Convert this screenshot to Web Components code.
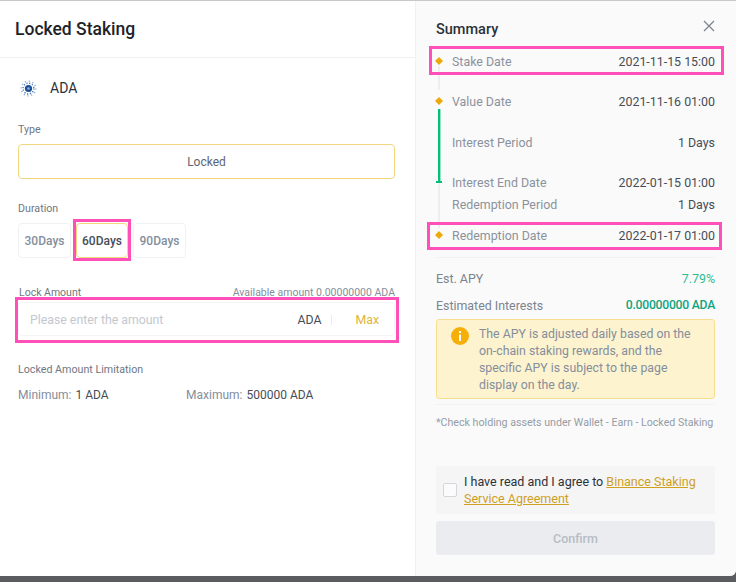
<!DOCTYPE html>
<html>
<head>
<meta charset="utf-8">
<title>Locked Staking</title>
<style>
  html, body { margin: 0; height: 100%; background: #5b5c5f; }
  body { font-family: Roboto, "Liberation Sans", sans-serif; overflow: hidden; }
</style>
</head>
<body>
<staking-modal>
  <form-panel slot="left">
    <panel-title>Locked Staking</panel-title>
    <form-body>
      <coin-row>ADA</coin-row>
      <field-label style="margin-top:24px">Type</field-label>
      <type-box>Locked</type-box>
      <field-label style="margin-top:22px">Duration</field-label>
      <tab-row>
        <duration-tab>30Days</duration-tab>
        <pink-frame style="--t:-4px;--r:-3px;--b:-3px;--l:-3px"><duration-tab active>60Days</duration-tab></pink-frame>
        <duration-tab>90Days</duration-tab>
      </tab-row>
      <amount-head>
        <span>Lock Amount</span>
        <span slot="right">Available amount 0.00000000 ADA</span>
      </amount-head>
      <pink-frame style="--t:-5px;--r:-4px;--b:-7px;--l:-3px">
        <amount-input placeholder="Please enter the amount"></amount-input>
      </pink-frame>
      <field-label style="margin-top:26px">Locked Amount Limitation</field-label>
      <limit-row>
        <limit-item label="Minimum:">1 ADA</limit-item>
        <limit-item label="Maximum:">500000 ADA</limit-item>
      </limit-row>
    </form-body>
  </form-panel>
  <summary-panel slot="right">
    <summary-head>Summary</summary-head>
    <date-list>
      <pink-frame style="--t:-5px;--r:-9px;--b:-4px;--l:-23px"><summary-row label="Stake Date">2021-11-15 15:00</summary-row></pink-frame>
      <summary-row style="margin-top:20px" label="Value Date">2021-11-16 01:00</summary-row>
      <summary-row style="margin-top:21px" label="Interest Period">1 Days</summary-row>
      <summary-row style="margin-top:20px" label="Interest End Date">2022-01-15 01:00</summary-row>
      <summary-row style="margin-top:2px" label="Redemption Period">1 Days</summary-row>
      <pink-frame style="margin-top:11px;--t:-3px;--r:-7px;--b:-5px;--l:-25px"><summary-row label="Redemption Date">2022-01-17 01:00</summary-row></pink-frame>
    </date-list>
    <rate-list>
      <rate-row label="Est. APY">7.79%</rate-row>
      <rate-row style="margin-top:7px" label="Estimated Interests" strong>0.00000000 ADA</rate-row>
    </rate-list>
    <info-note>The APY is adjusted daily based on the on-chain staking rewards, and the specific APY is subject to the page display on the day.</info-note>
    <hold-note>*Check holding assets under Wallet - Earn - Locked Staking</hold-note>
    <agree-box>I have read and I agree to <a>Binance Staking</a> <a>Service Agreement</a></agree-box>
    <confirm-button>Confirm</confirm-button>
  </summary-panel>
</staking-modal>

<script>
function define(name, html) {
  customElements.define(name, class extends HTMLElement {
    constructor() {
      super();
      this.attachShadow({ mode: 'open' }).innerHTML = html;
    }
    connectedCallback() {
      // attributes are copied into the [data-attr] spots
      this.shadowRoot.querySelectorAll('[data-attr]').forEach((el) => {
        el.textContent = this.getAttribute(el.dataset.attr) || '';
      });
    }
  });
}

define('staking-modal', `
<style>
  :host { display: flex; width: 736px; height: 576px; box-sizing: border-box; border-top: 1px solid #c9c9c9;
    background: #fff; border-bottom-right-radius: 6px; overflow: hidden; }
  .l { display: block; width: 416px; flex: none; }
  .r { display: block; width: 320px; flex: none; min-width: 0; }
</style>
<div class="l"><slot name="left"></slot></div>
<div class="r"><slot name="right"></slot></div>`);

define('form-panel', `<style>:host { display: block; height: 575px; background: #fff; border-right: 1px solid #f1f1f1; box-sizing: border-box; }</style><slot></slot>`);

define('panel-title', `
<style>:host { display: flex; align-items: center; height: 57px; box-sizing: border-box; padding: 0 0 0 15px;
  border-bottom: 1px solid #eeeff0; font-size: 17.5px; font-weight: 500; color: #1e2329; }</style><slot></slot>`);

define('form-body', `<style>:host { display: block; padding: 20px 20px 0 18px; }</style><slot></slot>`);

define('coin-row', `
<style>
  :host { display: flex; align-items: center; gap: 13px; height: 20px; padding-left: 2px; font-size: 14px; color: #2b3139; }
  svg { display: block; }
</style>
<svg width="17" height="17" viewBox="0 0 17 17">
  <circle cx="8.5" cy="8.5" r="7.3" fill="none" stroke="#7fa6d6" stroke-width="1.5" stroke-dasharray="1 2.82"/>
  <circle cx="8.5" cy="8.5" r="5.4" fill="none" stroke="#4a7fc0" stroke-width="1.5" stroke-dasharray="1.2 1.63"/>
  <circle cx="8.5" cy="8.5" r="3.6" fill="#1d4f95"/>
  <circle cx="8.5" cy="8.5" r="1.3" fill="#8fb2dc"/>
</svg>
<slot></slot>`);

define('field-label', `<style>:host { display: block; font-size: 10.7px; line-height: 16px; color: #6f7782; }</style><slot></slot>`);

define('type-box', `
<style>:host { display: flex; align-items: center; justify-content: center; height: 35px; box-sizing: border-box; margin-top: 6px;
  border: 1px solid #f3d77e; border-radius: 4px; font-size: 12px; color: #5e6673; }</style><slot></slot>`);

define('tab-row', `<style>:host { display: flex; gap: 5px; margin-top: 6px; }</style><slot></slot>`);

define('duration-tab', `
<style>
  :host { display: flex; align-items: center; justify-content: center; width: 53px; height: 35px; box-sizing: border-box;
    border: 1px solid #f0f1f2; border-radius: 4px; font-size: 12px; font-weight: 500; color: #848e9c; }
  :host([active]) { width: 52px; border-color: #f3d77e; color: #474d57; }
</style><slot></slot>`);

define('pink-frame', `
<style>
  :host { display: block; position: relative; }
  i { position: absolute; top: var(--t); right: var(--r); bottom: var(--b); left: var(--l); border: 3px solid #ff4fb8; pointer-events: none; }
</style><slot></slot><i></i>`);

define('amount-head', `
<style>
  :host { display: flex; justify-content: space-between; align-items: center; height: 16px; margin-top: 26px; padding-left: 1px; font-size: 10.5px; color: #6f7782; }
  .r { color: #848e9c; }
</style><slot></slot><span class="r"><slot name="right"></slot></span>`);

define('amount-input', `
<style>
  :host { display: flex; align-items: center; height: 34px; box-sizing: border-box; margin-top: 2px; padding: 2px 15px 0 11px;
    border: 1px solid #f3f4f5; border-radius: 4px; font-size: 12.3px; }
  .ph { flex: 1; color: #c3c8cf; }
  .cur { color: #474d57; }
  .bar { width: 1px; height: 10px; margin: 0 23px 0 10px; background: #e9ebee; }
  .max { color: #e0b53a; }
</style>
<span class="ph" data-attr="placeholder"></span><span class="cur">ADA</span><span class="bar"></span><span class="max">Max</span>`);

define('limit-row', `<style>:host { display: grid; grid-template-columns: 168px 1fr; margin-top: 8px; font-size: 12px; }</style><slot></slot>`);

define('limit-item', `
<style>:host { display: block; line-height: 18px; color: #474d57; } span { color: #848e9c; margin-right: 4px; }</style>
<span data-attr="label"></span><slot></slot>`);

define('summary-panel', `<style>:host { display: block; height: 575px; padding: 0 21px 0 20px; background: #fafafa; }</style><slot></slot>`);

define('summary-head', `
<style>
  :host { display: flex; justify-content: space-between; align-items: flex-start; height: 50px; padding-top: 20px; box-sizing: border-box;
    font-size: 14.5px; line-height: 18px; font-weight: 500; color: #2b3139; }
  svg { display: block; margin-top: -1px; }
</style>
<slot></slot>
<svg width="12" height="12" viewBox="0 0 12 12"><path d="M1 1 L11 11 M11 1 L1 11" fill="none" stroke="#7d8590" stroke-width="1.3"/></svg>`);

define('date-list', `
<style>
  :host { display: grid; grid-template-columns: 16px 1fr; padding-bottom: 12px; border-bottom: 1px solid #f1f2f3; }
  svg { grid-column: 1; grid-row: 1; display: block; overflow: visible; }
  .rows { grid-column: 2; grid-row: 1; }
</style>
<svg width="16" height="185" viewBox="0 0 16 185">
  <!-- coordinates are relative to the list's top, 50px down the modal -->
  <rect x="2" y="15" width="2" height="24" fill="#eceef0"/>
  <rect x="2" y="131" width="2" height="46" fill="#eceef0"/>
  <rect x="2" y="58" width="2.4" height="73" fill="#02c076"/>
  <rect x="0" y="130" width="6" height="2" fill="#02c076"/>
  <path d="M3 6 L7 10 L3 14 L-1 10 Z" fill="#f0a90b"/>
  <path d="M3 46 L7 50 L3 54 L-1 50 Z" fill="#f0a90b"/>
  <path d="M3 180 L7 184 L3 188 L-1 184 Z" fill="#f0a90b"/>
</svg>
<div class="rows"><slot></slot></div>`);

define('summary-row', `
<style>
  :host { display: flex; justify-content: space-between; align-items: center; height: 20px; font-size: 12.4px; color: #474d57; }
  .k { color: #8b929d; }
</style>
<span class="k" data-attr="label"></span><span><slot></slot></span>`);

define('rate-list', `<style>:host { display: block; padding-top: 10px; }</style><slot></slot>`);

define('rate-row', `
<style>
  :host { display: flex; justify-content: space-between; align-items: center; height: 20px; font-size: 12.4px; color: #2ebd94; }
  :host([strong]) { color: #11a37e; }
  :host([strong]) .v { font-size: 12.2px; font-weight: 500; letter-spacing: -.25px; }
  .k { color: #7c848f; }
</style>
<span class="k" data-attr="label"></span><span class="v"><slot></slot></span>`);

define('info-note', `
<style>
  :host { display: flex; gap: 10px; box-sizing: border-box; height: 80px; margin-top: 4px; padding: 6px 14px 0 14px; border: 1px solid #f8df8f;
    border-radius: 3px; background: #fdf3cf; font-size: 12.3px; line-height: 17px; color: #848e9c; }
  svg { flex: none; display: block; margin-top: 1px; }
</style>
<svg width="18" height="18" viewBox="0 0 18 18">
  <circle cx="9" cy="9" r="9" fill="#f6ae08"/>
  <rect x="8" y="7.6" width="2" height="6.4" fill="#fff"/>
  <rect x="8" y="4" width="2" height="2" fill="#fff"/>
</svg>
<span><slot></slot></span>`);

define('hold-note', `
<style>:host { display: block; margin-top: 5px; padding-top: 10px; border-top: 1px solid #f1f2f3; height: 62px; box-sizing: border-box;
  font-size: 10.65px; line-height: 16px; color: #969ca6; white-space: nowrap; }</style><slot></slot>`);

define('agree-box', `
<style>
  :host { display: flex; align-items: center; gap: 7px; height: 48px; box-sizing: border-box; padding-left: 7px; border-radius: 3px;
    background: #f5f5f5; font-size: 12.5px; line-height: 17px; color: #2b3139; }
  .c { flex: none; width: 14px; height: 14px; box-sizing: border-box; border: 1px solid #d3d6db; border-radius: 2px; background: #fbfbfb; }
  .t { flex: 1; padding-right: 12px; }
  ::slotted(a) { color: #cf9f1f; text-decoration: underline; }
</style>
<span class="c"></span><span class="t"><slot></slot></span>`);

define('confirm-button', `
<style>:host { display: flex; align-items: center; justify-content: center; height: 34px; margin-top: 7px; border-radius: 3px;
  background: #eaecef; font-size: 12.5px; font-weight: 500; color: #b7bdc6; }</style><slot></slot>`);
</script>
</body>
</html>
